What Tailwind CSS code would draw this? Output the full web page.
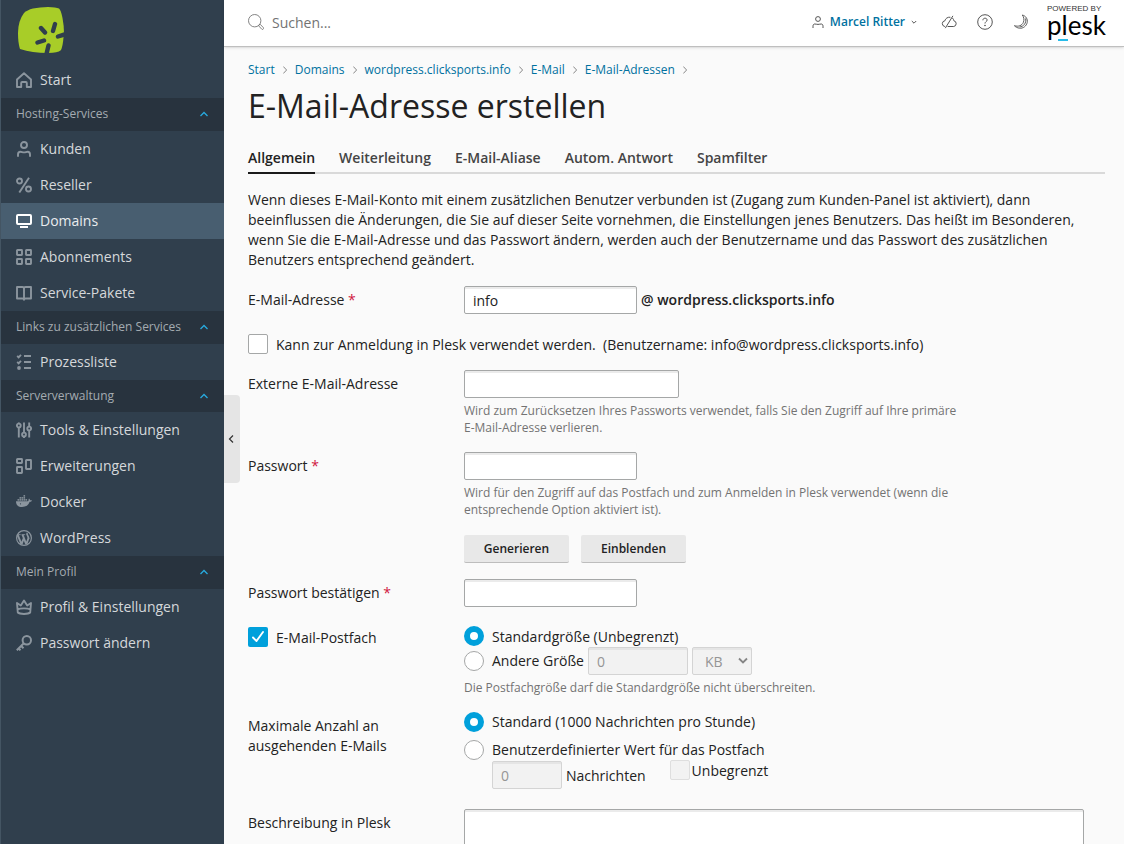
<!DOCTYPE html>
<html lang="de">
<head>
  <meta charset="UTF-8">
  <meta name="viewport" content="width=device-width, initial-scale=1">
  <title>E-Mail-Adresse erstellen</title>
  <script src="https://cdn.jsdelivr.net/npm/@tailwindcss/browser@4"></script>
</head>
<body class="flex h-screen overflow-hidden bg-[#fafafa] font-['Open_Sans',sans-serif] text-sm text-[#222]">

  <!-- Sidebar -->
  <aside class="w-56 shrink-0 overflow-hidden border-l border-[#445563] bg-[#303f4d] text-[#d5d8db]">
    <a href="#" aria-label="Startseite" class="block h-[62px] pt-[7px] pl-[17px]">
      <svg class="size-[46px]" viewBox="0 0 46 46" fill="none">
        <path d="M6 6Q9 3 15 1.500Q22 0 30 0Q38 .3 41 1.500Q43 3 44.500 11Q46 19 46 26L45 35Q44 42 42.500 43.500Q40 45.500 30 46Q14 46 2 42Q0 36 0 26Q0 14 6 6Z" fill="#a8cd28"/>
        <path d="M23 21L27 25.500M37 17L35 24M19.500 35.500L26 33.500M40 29.500L48 27M30.500 38.500L28.500 47" stroke="#303f4d" stroke-width="4.400" stroke-linecap="round"/>
      </svg>
    </a>

    <nav>
      <a href="#" class="flex h-9 items-center gap-2 pl-[15px]">
        <svg class="size-4 text-[#8b959e]" viewBox="0 0 16 16" fill="none" stroke="currentColor" stroke-width="1.900" stroke-linejoin="round"><path d="M1 7.500L8 1.200l7 6.300V15h-4.200v-4a1 1 0 0 0-1-1H6.200a1 1 0 0 0-1 1v4H1z"/></svg>
        Start
      </a>

      <button type="button" class="flex w-full items-center justify-between bg-[#28333e] pt-[7px] pr-[15px] pb-[9px] pl-[15px] text-xs leading-[17px] text-[#a4abb1]">
        Hosting-Services
        <svg class="h-2 w-2.5 text-[#28aade]" viewBox="0 0 10 8" fill="none" stroke="currentColor" stroke-width="1.300"><path d="M1.500 6L5 2.500 8.500 6"/></svg>
      </button>
      <a href="#" class="flex h-9 items-center gap-2 pl-[15px]">
        <svg class="size-4 text-[#8b959e]" viewBox="0 0 16 16" fill="none" stroke="currentColor" stroke-width="1.900"><circle cx="8" cy="4" r="3"/><path d="M2 15.800v-2.300c0-1.900 1-2.800 2.400-2.800 1.400 0 2 .7 3.600.7s2.200-.7 3.600-.7c1.400 0 2.400.9 2.400 2.800v2.300"/></svg>
        Kunden
      </a>
      <a href="#" class="flex h-9 items-center gap-2 pl-[15px]">
        <svg class="size-4 text-[#8b959e]" viewBox="0 0 16 16" fill="none" stroke="currentColor" stroke-width="1.900"><circle cx="3.500" cy="4" r="2.500"/><circle cx="12.500" cy="12" r="2.500"/><path d="M13 .7L3.300 15.500"/></svg>
        Reseller
      </a>
      <a href="#" aria-current="page" class="flex h-9 items-center gap-2 bg-[#485e70] pl-[15px] text-[#e9ecee]">
        <svg class="size-4 text-white" viewBox="0 0 16 16" fill="none" stroke="currentColor" stroke-width="2"><rect x="1" y="2" width="14" height="9" rx="1"/><path d="M4 14h8"/></svg>
        Domains
      </a>
      <a href="#" class="flex h-9 items-center gap-2 pl-[15px]">
        <svg class="size-4 text-[#8b959e]" viewBox="0 0 16 16" fill="none" stroke="currentColor" stroke-width="1.900"><rect x="1" y="1" width="5" height="5" rx=".5"/><rect x="10" y="1" width="5" height="5" rx=".5"/><rect x="1" y="10" width="5" height="5" rx=".5"/><rect x="10" y="10" width="5" height="5" rx=".5"/></svg>
        Abonnements
      </a>
      <a href="#" class="flex h-9 items-center gap-2 pl-[15px]">
        <svg class="size-4 text-[#8b959e]" viewBox="0 0 16 16" fill="none" stroke="currentColor" stroke-width="1.900" stroke-linejoin="round"><path d="M1 2H6.500c1 0 1.500.5 1.500 1.500C8 2.500 8.500 2 9.500 2H15v11.500H9.500c-1 0-1.500.5-1.500 1.300 0-.8-.5-1.300-1.500-1.300H1zM8 3v12"/></svg>
        Service-Pakete
      </a>

      <button type="button" class="flex w-full items-center justify-between bg-[#28333e] pt-[7px] pr-[15px] pb-[9px] pl-[15px] text-xs leading-[17px] text-[#a4abb1]">
        Links zu zusätzlichen Services
        <svg class="h-2 w-2.5 text-[#28aade]" viewBox="0 0 10 8" fill="none" stroke="currentColor" stroke-width="1.300"><path d="M1.500 6L5 2.500 8.500 6"/></svg>
      </button>
      <a href="#" class="flex h-9 items-center gap-2 pl-[15px]">
        <svg class="size-4 text-[#8b959e]" viewBox="0 0 16 16" fill="none" stroke="currentColor" stroke-width="1.900"><path d="M8 2h7M8 8h7M8 14h7M1.200 1.900l1.400 1.400L5 .8M1.200 7.900l1.400 1.400L5 6.800"/><circle cx="3" cy="14" r="1.900" fill="currentColor" stroke="none"/></svg>
        Prozessliste
      </a>

      <button type="button" class="flex w-full items-center justify-between bg-[#28333e] py-2 pr-[15px] pl-[15px] text-xs leading-4 text-[#a4abb1]">
        Serververwaltung
        <svg class="h-2 w-2.5 text-[#28aade]" viewBox="0 0 10 8" fill="none" stroke="currentColor" stroke-width="1.300"><path d="M1.500 6L5 2.500 8.500 6"/></svg>
      </button>
      <a href="#" class="flex h-9 items-center gap-2 pl-[15px]">
        <svg class="size-4 text-[#8b959e]" viewBox="0 0 16 16" fill="none" stroke="currentColor" stroke-width="1.900"><circle cx="2.800" cy="3.500" r="1.900"/><circle cx="8" cy="12.500" r="1.900"/><circle cx="13.200" cy="6.500" r="1.900"/><path d="M2.800 5.400V15.500M8 .5v10.100M8 14.400v1.500M13.200.5v4.100M13.200 8.400v7.100M2.800.4v1.200"/></svg>
        Tools &amp; Einstellungen
      </a>
      <a href="#" class="flex h-9 items-center gap-2 pl-[15px]">
        <svg class="size-4 text-[#8b959e]" viewBox="0 0 16 16" fill="none" stroke="currentColor" stroke-width="1.900"><rect x="1" y="1" width="5" height="4" rx=".5"/><rect x="1" y="9" width="5" height="6" rx=".5"/><rect x="10" y="2" width="5" height="9" rx=".5"/></svg>
        Erweiterungen
      </a>
      <a href="#" class="flex h-9 items-center gap-2 pl-[15px]">
        <svg class="size-4 text-[#8b959e]" viewBox="0 0 16 16" fill="currentColor"><path d="M0 7.200h11.800c.6-.2.900-.6.8-1.300-.1-.5 0-1 .4-1.400.7.500 1 1.100 1 1.700.8-.1 1.500 0 2 .4-.4.900-1.200 1.300-2.300 1.200C12.500 11.200 10 13 6 13 2 13 0 11 0 7.200z"/><path d="M1.500 5.100h1.600v1.600H1.500zM3.500 5.100h1.600v1.600H3.500zM5.500 5.100h1.600v1.600H5.500zM7.500 5.100h1.600v1.600H7.500zM9.500 5.100h1.600v1.600H9.500zM3.500 3.100h1.600v1.600H3.500zM5.500 3.100h1.600v1.600H5.500zM7.500 3.100h1.600v1.600H7.500zM7.500 1.100h1.600v1.600H7.500z" opacity=".85"/><circle cx="4.500" cy="9.800" r=".6" fill="#303f4d"/></svg>
        Docker
      </a>
      <a href="#" class="flex h-9 items-center gap-2 pl-[15px]">
        <svg class="size-4 text-[#8b959e]" viewBox="0 0 16 16" fill="none" stroke="currentColor"><circle cx="8" cy="8" r="7.400" stroke-width="1.200"/><path d="M1.800 5.200l3.600 9M8 7.500l-2.500 6.800M6.500 4.600l3.700 9.500M12.700 7.700l-2.300 6.300" stroke-width="1.900"/><path d="M1.500 4.700h3.200M5.500 4.700h3.700" stroke-width=".9"/><path d="M11.300 3c-.7.900-.2 2 .5 3 .6.900.8 1.700.6 2.500" stroke-width="1.700"/></svg>
        WordPress
      </a>

      <button type="button" class="flex w-full items-center justify-between bg-[#28333e] pt-[7px] pr-[15px] pb-[9px] pl-[15px] text-xs leading-[17px] text-[#a4abb1]">
        Mein Profil
        <svg class="h-2 w-2.5 text-[#28aade]" viewBox="0 0 10 8" fill="none" stroke="currentColor" stroke-width="1.300"><path d="M1.500 6L5 2.500 8.500 6"/></svg>
      </button>
      <a href="#" class="flex h-9 items-center gap-2 pl-[15px]">
        <svg class="size-4 text-[#8b959e]" viewBox="0 0 16 16" fill="none" stroke="currentColor" stroke-width="1.900" stroke-linejoin="round"><path d="M1 4l3.800 2.500L8 1.500l3.200 5L15 4l-.8 9.500c-2 1.900-10.400 1.900-12.400 0zM1.500 10.500c3-1.500 10-1.500 13 0"/></svg>
        Profil &amp; Einstellungen
      </a>
      <a href="#" class="flex h-9 items-center gap-2 pl-[15px]">
        <svg class="size-4 text-[#8b959e]" viewBox="0 0 16 16" fill="none" stroke="currentColor" stroke-width="2"><circle cx="10.800" cy="5.200" r="4.200"/><path d="M7.800 8.200L.8 15.200M5.200 11l2.300 2.300M2.700 13.500L4.500 15.300"/></svg>
        Passwort ändern
      </a>
    </nav>
  </aside>

  <div class="relative flex min-w-0 flex-1 flex-col">
    <!-- Collapse handle -->
    <button type="button" aria-label="Menü einklappen" class="absolute top-[395px] left-0 flex h-[88px] w-4 items-center rounded-r bg-[#e5e5e5] pl-1">
      <svg class="h-2.5 w-1.5" viewBox="0 0 6 10" fill="none" stroke="#333" stroke-width="1.200"><path d="M5 1.500L1.500 5 5 8.500"/></svg>
    </button>

    <!-- Top bar -->
    <header class="flex h-[47px] shrink-0 items-center border-b border-[#bfbfbf] bg-white pr-[19px] pl-6 shadow-sm">
      <label for="search" class="mb-0.5">
        <svg class="size-4" viewBox="0 0 16 16" fill="none" stroke="#777" stroke-width=".9"><circle cx="6.700" cy="6.700" r="6.200"/><path d="M11.200 10.700l.9-.5 3.400 3.600q.3.800-.3 1.300-.6.600-1.300.2l-3.300-3.500z"/></svg>
      </label>
      <input id="search" type="text" placeholder="Suchen..." class="mb-0.5 ml-2 h-7 min-w-0 flex-1 bg-transparent outline-none placeholder:text-[#737373]">
      <button type="button" class="mb-0.5 flex items-center text-xs font-semibold text-[#00719f]">
        <svg class="mr-1.5 size-3" viewBox="0 0 12 12" fill="none" stroke="#555" stroke-width="1"><circle cx="6" cy="3" r="2.400"/><path d="M1 12v-1.800C1 8.700 1.700 8 2.800 8 4 8 4.500 8.400 6 8.400S8 8 9.200 8c1.100 0 1.800.7 1.800 2.200V12"/></svg>
        Marcel Ritter
        <svg class="ml-1.5 size-1.5" viewBox="0 0 6 6" fill="none" stroke="#555" stroke-width="1"><path d="M.8 2L3 4.200 5.200 2"/></svg>
      </button>
      <button type="button" aria-label="Cloud" class="ml-6 mb-0.5">
        <svg class="size-4" viewBox="0 0 16 16" fill="none" stroke="#555" stroke-width="1" stroke-linecap="round"><path d="M7 12.500H12.700A2.900 2.900 0 0 0 12.900 6.800 4.700 4.700 0 0 0 11.700 4.300M9 3.200A4.500 4.500 0 0 0 3.900 6.800 2.900 2.900 0 0 0 3.500 12.500M11.700 2.200L4.500 13.800"/></svg>
      </button>
      <button type="button" aria-label="Hilfe" class="ml-5 mb-0.5">
        <svg class="size-4" viewBox="0 0 16 16" fill="none" stroke="#555" stroke-width="1"><circle cx="8" cy="8" r="7.300"/><path d="M5.900 6.300C5.900 4.900 6.800 4.200 8 4.200s2.100.7 2.100 1.900C10.100 7.500 8 7.700 8 9.500"/><circle cx="8" cy="11.500" r=".4" fill="#555"/></svg>
      </button>
      <button type="button" aria-label="Dunkelmodus" class="ml-5 mb-0.5">
        <svg class="size-4" viewBox="0 0 16 16" fill="none" stroke="#555" stroke-width=".95" stroke-linejoin="round"><path d="M9.300 1C13 2 14.800 5 14.200 8.500 13.500 12 10 14.700 6.500 14.200 4.300 13.900 2.600 13 1.400 11.700 5.500 13 9 11.500 10.300 8.500 11.400 6 11 3.200 9.300 1z"/><path d="M12.600 4.500C13.500 9 10.800 12.600 6.500 13"/></svg>
      </button>
      <a href="#" class="relative ml-[18px] flex w-[58px] flex-col text-black">
        <span class="font-['Liberation_Sans',sans-serif] text-[8px] leading-2 whitespace-nowrap text-[#333]">POWERED BY</span>
        <span class="mb-1 font-[Lato,sans-serif] text-[26px] leading-6">plesk</span>
        <span class="absolute bottom-0 left-[11px] h-0.5 w-2.5 bg-[#28bcea]"></span>
      </a>
    </header>

    <main class="flex-1 overflow-y-auto pt-[13px] pr-[19px] pl-6 [scrollbar-width:none]">
      <nav aria-label="Pfad" class="flex items-center gap-2 text-xs leading-5 text-[#00719f]">
        <a href="#">Start</a>
        <svg class="h-2 w-1" viewBox="0 0 4 8" fill="none" stroke="#888"><path d="M.3.500L3.600 4 .3 7.500"/></svg>
        <a href="#">Domains</a>
        <svg class="h-2 w-1" viewBox="0 0 4 8" fill="none" stroke="#888"><path d="M.3.500L3.600 4 .3 7.500"/></svg>
        <a href="#">wordpress.clicksports.info</a>
        <svg class="h-2 w-1" viewBox="0 0 4 8" fill="none" stroke="#888"><path d="M.3.500L3.600 4 .3 7.500"/></svg>
        <a href="#">E-Mail</a>
        <svg class="h-2 w-1" viewBox="0 0 4 8" fill="none" stroke="#888"><path d="M.3.500L3.600 4 .3 7.500"/></svg>
        <a href="#">E-Mail-Adressen</a>
        <svg class="h-2 w-1" viewBox="0 0 4 8" fill="none" stroke="#888"><path d="M.3.500L3.600 4 .3 7.500"/></svg>
      </nav>

      <h1 class="mt-1.5 text-[32px] leading-10">E-Mail-Adresse erstellen</h1>

      <!-- Tabs -->
      <nav aria-label="Bereiche" class="mt-[22px] flex gap-6 border-b-2 border-[#d9d9d9] leading-5 font-semibold text-[#444]">
        <a href="#" aria-current="page" class="-mb-0.5 border-b-2 border-[#1a1a1a] pb-1 text-[#222]">Allgemein</a>
        <a href="#" class="pb-1">Weiterleitung</a>
        <a href="#" class="pb-1">E-Mail-Aliase</a>
        <a href="#" class="pb-1">Autom. Antwort</a>
        <a href="#" class="pb-1">Spamfilter</a>
      </nav>

      <p class="mt-4 max-w-[836px] leading-5">Wenn dieses E-Mail-Konto mit einem zusätzlichen Benutzer verbunden ist (Zugang zum Kunden-Panel ist aktiviert), dann beeinflussen die Änderungen, die Sie auf dieser Seite vornehmen, die Einstellungen jenes Benutzers. Das heißt im Besonderen, wenn Sie die E-Mail-Adresse und das Passwort ändern, werden auch der Benutzername und das Passwort des zusätzlichen Benutzers entsprechend geändert.</p>

      <form class="mt-4 flex flex-col gap-4 pb-6 leading-5">
        <div class="grid grid-cols-[200px_1fr] gap-4">
          <label for="address" class="pt-1">E-Mail-Adresse <span class="text-[#d0163e]">*</span></label>
          <div class="flex items-center gap-1">
            <input id="address" type="text" value="info" class="h-7 w-[173px] rounded-xs border border-[#a5a7a7] bg-white px-2 shadow-[inset_0_2px_0_#ebebeb]">
            <span class="font-semibold">@ wordpress.clicksports.info</span>
          </div>
        </div>

        <div class="flex h-6 items-end gap-2">
          <input id="login" type="checkbox" class="size-5 appearance-none rounded-xs border border-[#a5a7a7] bg-white">
          <label for="login" class="h-5 leading-[22px] whitespace-pre">Kann zur Anmeldung in Plesk verwendet werden.  (Benutzername: info@wordpress.clicksports.info)</label>
        </div>

        <div class="grid grid-cols-[200px_1fr] gap-4">
          <label for="external" class="pt-1">Externe E-Mail-Adresse</label>
          <div>
            <input id="external" type="email" class="block h-7 w-[215px] rounded-xs border border-[#a5a7a7] bg-white px-2 shadow-[inset_0_2px_0_#ebebeb]">
            <p class="mt-1 max-w-[500px] text-xs leading-[17px] text-[#737373]">Wird zum Zurücksetzen Ihres Passworts verwendet, falls Sie den Zugriff auf Ihre primäre E-Mail-Adresse verlieren.</p>
          </div>
        </div>

        <div class="grid grid-cols-[200px_1fr] gap-4">
          <label for="password" class="pt-1">Passwort <span class="text-[#d0163e]">*</span></label>
          <div>
            <input id="password" type="password" class="block h-7 w-[173px] rounded-xs border border-[#a5a7a7] bg-white px-2 shadow-[inset_0_2px_0_#ebebeb]">
            <p class="mt-1 max-w-[500px] text-xs leading-[17px] text-[#737373]">Wird für den Zugriff auf das Postfach und zum Anmelden in Plesk verwendet (wenn die entsprechende Option aktiviert ist).</p>
            <div class="mt-[17px] flex gap-3">
              <button type="button" class="h-7 w-[105px] rounded-xs border-b border-[#bdbdbd] bg-[#e8e8e8] text-xs font-semibold">Generieren</button>
              <button type="button" class="h-7 w-[105px] rounded-xs border-b border-[#bdbdbd] bg-[#e8e8e8] text-xs font-semibold">Einblenden</button>
            </div>
          </div>
        </div>

        <div class="grid grid-cols-[200px_1fr] gap-4">
          <label for="confirm" class="pt-1">Passwort bestätigen <span class="text-[#d0163e]">*</span></label>
          <input id="confirm" type="password" class="h-7 w-[173px] rounded-xs border border-[#a5a7a7] bg-white px-2 shadow-[inset_0_2px_0_#ebebeb]">
        </div>

        <div class="grid grid-cols-[200px_1fr] gap-4">
          <div class="flex gap-2 pt-1">
            <span class="relative size-5">
              <input id="mailbox" type="checkbox" checked class="block size-5 appearance-none rounded-xs bg-[#00a0db]">
              <svg class="pointer-events-none absolute inset-0 size-5" viewBox="0 0 20 20" fill="none" stroke="#fff" stroke-width="1.900" stroke-linecap="round" stroke-linejoin="round"><path d="M5 10.500L8.500 14 15 5"/></svg>
            </span>
            <label for="mailbox" class="h-5 leading-[22px]">E-Mail-Postfach</label>
          </div>
          <div class="pt-[3px]">
            <div class="flex gap-2">
              <input id="size-default" name="size" type="radio" checked class="size-5 appearance-none rounded-full border-[6px] border-[#00a0db] bg-white">
              <label for="size-default" class="h-5 leading-[22px]">Standardgröße (Unbegrenzt)</label>
            </div>
            <div class="mt-px flex items-center gap-1">
              <input id="size-other" name="size" type="radio" class="size-5 appearance-none rounded-full border border-[#a5a7a7] bg-white">
              <label for="size-other" class="ml-1">Andere Größe</label>
              <input type="text" value="0" disabled aria-label="Postfachgröße" class="h-7 w-[100px] rounded-xs border border-[#d4d4d4] bg-[#f2f2f2] px-2 text-[#959595] shadow-[inset_0_2px_0_#e5e5e5]">
              <span class="relative">
                <select disabled aria-label="Einheit" class="block h-7 w-[60px] appearance-none rounded-xs border border-[#d4d4d4] bg-[#f2f2f2] pt-0.5 pl-3 text-[#959595] opacity-100 shadow-[inset_0_2px_0_#e5e5e5]">
                  <option>KB</option>
                </select>
                <svg class="pointer-events-none absolute top-2.5 right-1 h-2 w-2.5" viewBox="0 0 10 8" fill="none" stroke="#858585" stroke-width="1.800"><path d="M1 1.500L5 5.500 9 1.500"/></svg>
              </span>
            </div>
            <p class="mt-1 text-xs leading-[17px] text-[#737373]">Die Postfachgröße darf die Standardgröße nicht überschreiten.</p>
          </div>
        </div>

        <div class="grid grid-cols-[200px_1fr] gap-4">
          <span class="max-w-[150px] pt-1">Maximale Anzahl an ausgehenden E-Mails</span>
          <div>
            <div class="flex gap-2">
              <input id="limit-default" name="limit" type="radio" checked class="size-5 appearance-none rounded-full border-[6px] border-[#00a0db] bg-white">
              <label for="limit-default">Standard (1000 Nachrichten pro Stunde)</label>
            </div>
            <div class="mt-2 flex gap-2">
              <input id="limit-custom" name="limit" type="radio" class="size-5 appearance-none rounded-full border border-[#a5a7a7] bg-white">
              <label for="limit-custom">Benutzerdefinierter Wert für das Postfach</label>
            </div>
            <div class="flex items-start pl-7">
              <div class="flex items-center gap-1 pt-px">
                <input id="messages" type="text" value="0" disabled class="h-7 w-[70px] rounded-xs border border-[#d4d4d4] bg-[#f2f2f2] px-2 text-[#959595] shadow-[inset_0_2px_0_#e5e5e5]">
                <label for="messages" class="h-5 leading-[22px]">Nachrichten</label>
              </div>
              <div class="ml-6 flex gap-0.5">
                <input id="unlimited" type="checkbox" disabled class="size-5 appearance-none rounded-xs border border-[#dedede] bg-[#f2f2f2]">
                <label for="unlimited" class="h-5 leading-[22px]">Unbegrenzt</label>
              </div>
            </div>
          </div>
        </div>

        <div class="mt-1 grid grid-cols-[200px_1fr] gap-4">
          <label for="description" class="pt-1">Beschreibung in Plesk</label>
          <textarea id="description" rows="4" class="w-full max-w-[620px] resize-none rounded-xs border border-[#a5a7a7] bg-white px-2 py-1 shadow-[inset_0_2px_0_#ebebeb]"></textarea>
        </div>
      </form>
    </main>
  </div>
</body>
</html>
